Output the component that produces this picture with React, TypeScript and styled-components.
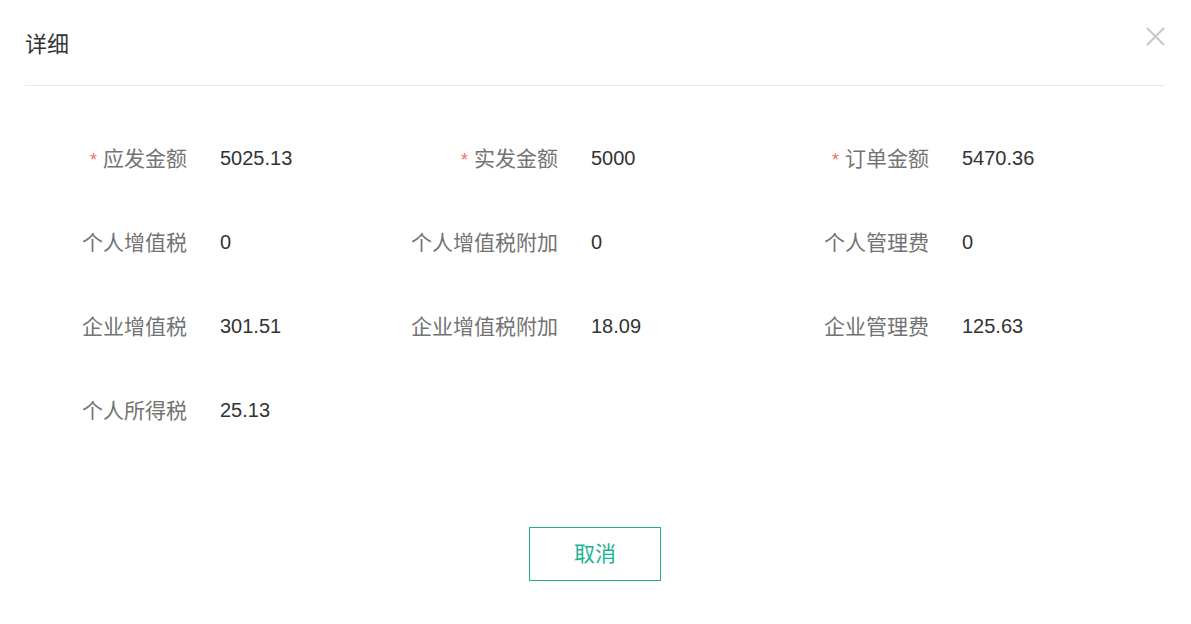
import React from "react";
import styled, { createGlobalStyle } from "styled-components";

const Global = createGlobalStyle`
  html, body { margin: 0; padding: 0; background: #fff; }
  body { font-family: "Liberation Sans", "Noto Sans CJK SC", Arial, sans-serif; }
`;

const Dialog = styled.div`
  width: 1191px;
  height: 624px;
  background: #fff;
  display: flex;
  flex-direction: column;
`;

const Header = styled.div`
  margin: 0 26px 0 25px;
  height: 86px;
  display: flex;
  align-items: center;
  justify-content: space-between;
  border-bottom: 1px solid #e8e8e8;
  box-sizing: border-box;
`;

const Title = styled.div`
  font-size: 22px;
  color: #333;
  font-family: "Noto Sans CJK SC", sans-serif;
  margin-top: -1px;
`;

const CloseButton = styled.button`
  border: none;
  background: none;
  padding: 0;
  width: 20px;
  height: 20px;
  margin-top: -13px;
  display: flex;
  align-items: center;
  justify-content: center;
  cursor: pointer;
`;

const Form = styled.div`
  margin-top: 30px;
  display: grid;
  grid-template-columns: repeat(3, 371px);
  grid-auto-rows: 84px;
`;

const Field = styled.div`
  display: flex;
  align-items: center;
`;

const Label = styled.div`
  width: 187px;
  text-align: right;
  color: #737373;
  white-space: nowrap;
  font-size: 21px;
  font-family: "Noto Sans CJK SC", sans-serif;
  margin-top: -2px;
`;

const Star = styled.span`
  color: #f56c6c;
  margin-right: 6px;
  font-size: 18px;
  font-family: "Liberation Sans", sans-serif;
`;

const Value = styled.div`
  margin-left: 33px;
  color: #333;
  font-size: 20px;
`;

const Footer = styled.div`
  margin-top: 75px;
  display: flex;
  justify-content: center;
`;

const CancelButton = styled.button`
  width: 132px;
  height: 54px;
  margin-left: -1px;
  padding: 0 0 4px;
  box-sizing: border-box;
  border: 1px solid #1ab394;
  background: #fff;
  color: #1ab394;
  font-size: 21px;
  font-family: "Noto Sans CJK SC", sans-serif;
  cursor: pointer;
`;

type Item = { label: string; value: string; required?: boolean };

const items: Item[] = [
  { label: "应发金额", value: "5025.13", required: true },
  { label: "实发金额", value: "5000", required: true },
  { label: "订单金额", value: "5470.36", required: true },
  { label: "个人增值税", value: "0" },
  { label: "个人增值税附加", value: "0" },
  { label: "个人管理费", value: "0" },
  { label: "企业增值税", value: "301.51" },
  { label: "企业增值税附加", value: "18.09" },
  { label: "企业管理费", value: "125.63" },
  { label: "个人所得税", value: "25.13" },
];

export default function App() {
  return (
    <>
      <Global />
      <Dialog>
        <Header>
          <Title>详细</Title>
          <CloseButton aria-label="close">
            <svg width="19" height="19" viewBox="0 0 19 19">
              <path d="M1 1L18 18M18 1L1 18" stroke="#c8c8c8" strokeWidth="2" fill="none" />
            </svg>
          </CloseButton>
        </Header>
        <Form>
          {items.map((it) => (
            <Field key={it.label}>
              <Label>
                {it.required && <Star>*</Star>}
                {it.label}
              </Label>
              <Value>{it.value}</Value>
            </Field>
          ))}
        </Form>
        <Footer>
          <CancelButton>取消</CancelButton>
        </Footer>
      </Dialog>
    </>
  );
}
